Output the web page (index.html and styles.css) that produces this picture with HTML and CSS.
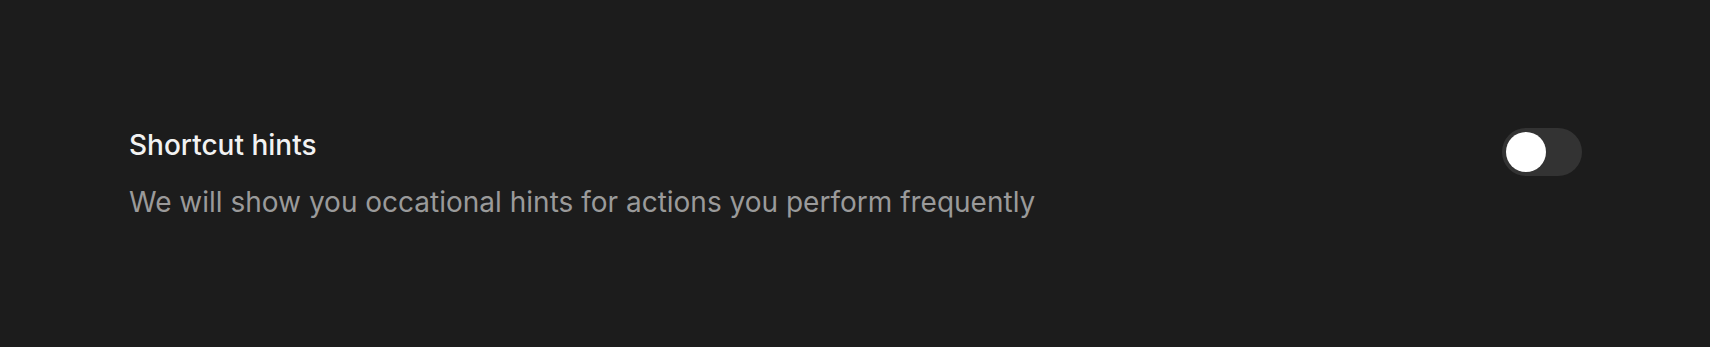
FILE: index.html
```html
<!DOCTYPE html>
<html>
<head>
<meta charset="utf-8">
<link rel="stylesheet" href="styles.css">
</head>
<body>
<div class="page">
  <div class="row">
    <div class="text">
      <div class="title">Shortcut hints</div>
      <div class="desc">We will show you occational hints for actions you perform frequently</div>
    </div>
    <div class="toggle"><div class="knob"></div></div>
  </div>
</div>
</body>
</html>
```
FILE: styles.css
```css
html, body { margin: 0; padding: 0; background: #1c1c1c; }
.page {
  width: 1710px; height: 347px; box-sizing: border-box;
  padding: 128px 128px 0 129px;
  font-family: Inter, "Noto Sans", sans-serif;
}
.row { display: flex; justify-content: space-between; align-items: flex-start; }
.text { display: flex; flex-direction: column; gap: 23px; }
.title { color: #f2f2f2; font-size: 28px; font-weight: 500; line-height: 34px; }
.desc { color: #9a9a9a; font-size: 28px; line-height: 34px; }
.toggle {
  width: 80px; height: 48px; border-radius: 24px; background: #333333;
  box-sizing: border-box; padding: 4px;
}
.knob { width: 40px; height: 40px; border-radius: 50%; background: #ffffff; }
```
